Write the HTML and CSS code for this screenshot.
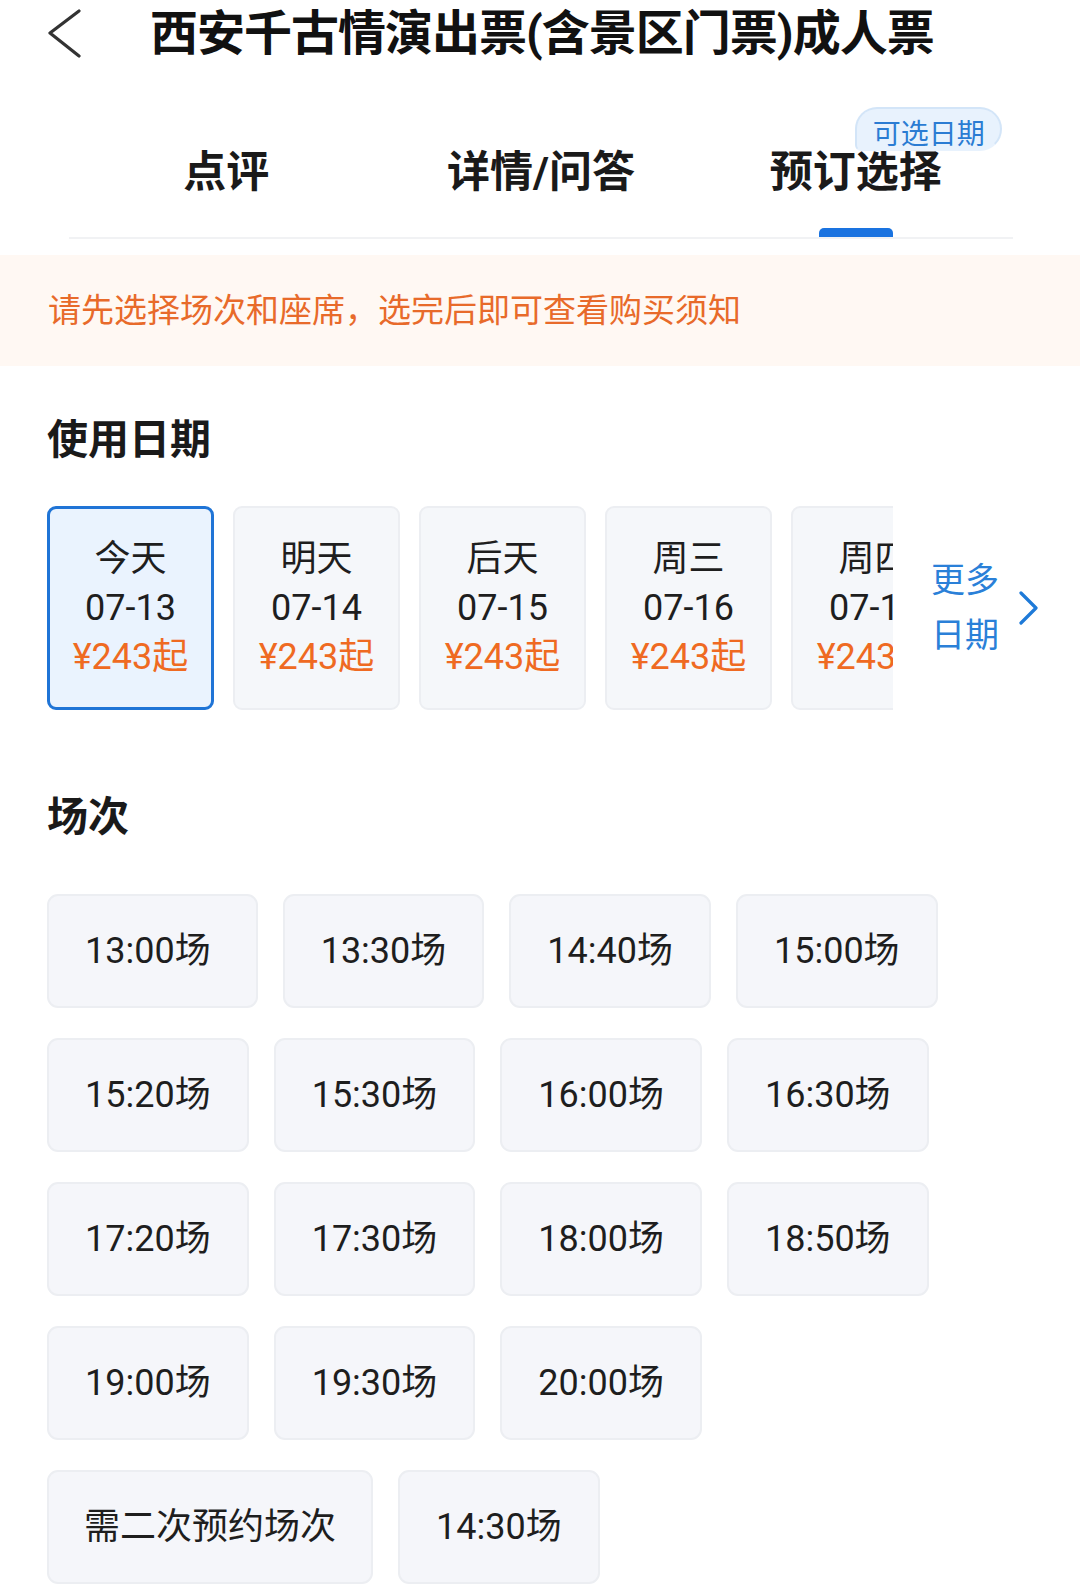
FILE: index.html
```html
<!DOCTYPE html>
<html lang="zh-CN">
<head>
<meta charset="utf-8">
<title>西安千古情演出票</title>
<link rel="stylesheet" href="styles.css">
</head>
<body>
<div class="page">
  <header class="header">
    <svg class="back" width="36" height="50" viewBox="0 0 36 50">
      <polyline points="32,2 3,24 32,47" fill="none" stroke="#333" stroke-width="3.2" stroke-linecap="round" stroke-linejoin="round"/>
    </svg>
    <h1 class="title">西安千古情演出票(含景区门票)成人票</h1>
  </header>

  <nav class="tabs">
    <div class="tab">点评</div>
    <div class="tab">详情/问答</div>
    <div class="tab active">预订选择<span class="badge">可选日期</span><span class="indicator"></span></div>
  </nav>

  <div class="notice">请先选择场次和座席，选完后即可查看购买须知</div>

  <h2 class="section-title">使用日期</h2>
  <div class="dates">
    <div class="date-strip">
      <div class="date-card selected"><span class="day">今天</span><span class="md">07-13</span><span class="price">¥243起</span></div>
      <div class="date-card"><span class="day">明天</span><span class="md">07-14</span><span class="price">¥243起</span></div>
      <div class="date-card"><span class="day">后天</span><span class="md">07-15</span><span class="price">¥243起</span></div>
      <div class="date-card"><span class="day">周三</span><span class="md">07-16</span><span class="price">¥243起</span></div>
      <div class="date-card"><span class="day">周四</span><span class="md">07-17</span><span class="price">¥243起</span></div>
    </div>
    <div class="more">
      <span class="more-text">更多<br>日期</span>
      <svg class="more-arrow" width="22" height="34" viewBox="0 0 22 34">
        <polyline points="3,2 18,17 3,32" fill="none" stroke="#1e7ad8" stroke-width="3.2" stroke-linecap="round" stroke-linejoin="round"/>
      </svg>
    </div>
  </div>

  <h2 class="section-title sessions-title">场次</h2>
  <div class="sessions">
    <div class="session wide">13:00场</div>
    <div class="session">13:30场</div>
    <div class="session">14:40场</div>
    <div class="session">15:00场</div>
    <div class="session">15:20场</div>
    <div class="session">15:30场</div>
    <div class="session">16:00场</div>
    <div class="session">16:30场</div>
    <div class="session">17:20场</div>
    <div class="session">17:30场</div>
    <div class="session">18:00场</div>
    <div class="session">18:50场</div>
    <div class="session">19:00场</div>
    <div class="session">19:30场</div>
    <div class="session">20:00场</div>
    <div class="session long">需二次预约场次</div>
    <div class="session">14:30场</div>
  </div>
</div>
</body>
</html>
```

FILE: styles.css
```css
* { box-sizing: border-box; }
html, body {
  margin: 0;
  padding: 0;
  background: #ffffff;
}
body {
  font-family: Roboto, "Noto Sans CJK SC", "Noto Sans", sans-serif;
  color: #1a1a1a;
}
.page {
  width: 1080px;
  height: 1585px;
  overflow: hidden;
}
.header {
  height: 68px;
  display: flex;
  align-items: center;
  padding-left: 47px;
}
.back {
  display: block;
  flex: none;
}
.title {
  margin: 0 0 0 67px;
  font-size: 48px;
  font-weight: 700;
  color: #111;
  line-height: 68px;
  white-space: nowrap;
  letter-spacing: -1px;
}
.tabs {
  display: flex;
  margin: 0 67px 0 69px;
  border-bottom: 2px solid #f1f2f4;
}
.tab {
  flex: 1;
  position: relative;
  text-align: center;
  font-size: 43px;
  font-weight: 700;
  color: #1a1a1a;
  line-height: 60px;
  padding: 74px 0 35px;
}
.badge {
  position: absolute;
  left: 157px;
  top: 39px;
  width: 147px;
  height: 44px;
  border-radius: 22px 22px 22px 6px;
  background: #e8f2fd;
  border: 2px solid #d3e5f8;
  border-bottom-color: transparent;
  color: #2b7cd3;
  font-size: 28px;
  font-weight: 400;
  line-height: 32px;
  padding-top: 10px;
  text-align: center;
}
.indicator {
  position: absolute;
  left: 50%;
  bottom: 0;
  width: 74px;
  height: 9px;
  margin-left: -37px;
  background: #1a73e0;
  border-radius: 5px 5px 0 0;
}
.notice {
  margin-top: 16px;
  height: 111px;
  background: #fff8f3;
  color: #e86a2a;
  font-size: 33px;
  line-height: 111px;
  padding-left: 48px;
}
.section-title {
  margin: 46px 0 0 47px;
  font-size: 41px;
  font-weight: 700;
  line-height: 56px;
  color: #1a1a1a;
}
.dates {
  display: flex;
  align-items: center;
  margin-top: 38px;
  padding-left: 47px;
}
.date-strip {
  display: flex;
  gap: 19px;
  width: 846px;
  overflow: hidden;
  flex: none;
}
.date-card {
  flex: none;
  width: 167px;
  height: 204px;
  border-radius: 9px;
  background: #f5f7fa;
  border: 2px solid #eceef2;
  display: flex;
  flex-direction: column;
  align-items: center;
  justify-content: center;
  font-size: 36px;
  line-height: 49px;
  color: #1e1e1e;
}
.date-card.selected {
  background: #eaf3fe;
  border: 3px solid #1f74d6;
}
.date-card .price {
  color: #ef6a22;
}
.more {
  display: flex;
  align-items: center;
  margin-left: 38px;
}
.more-text {
  color: #2a80d8;
  font-size: 34px;
  line-height: 55px;
}
.more-arrow {
  display: block;
  margin-left: 19px;
}
.sessions-title {
  margin-top: 79px;
}
.sessions {
  display: flex;
  flex-wrap: wrap;
  gap: 30px 25px;
  margin-top: 49px;
  padding-left: 47px;
  width: 1000px;
}
.session {
  height: 114px;
  padding: 0 36px;
  border-radius: 11px;
  background: #f5f6fa;
  border: 2px solid #eceef2;
  font-size: 36px;
  line-height: 110px;
  color: #1e1e1e;
  white-space: nowrap;
}
.session.wide {
  padding-right: 45px;
}
.session.long {
  padding: 0 35px;
}
```
